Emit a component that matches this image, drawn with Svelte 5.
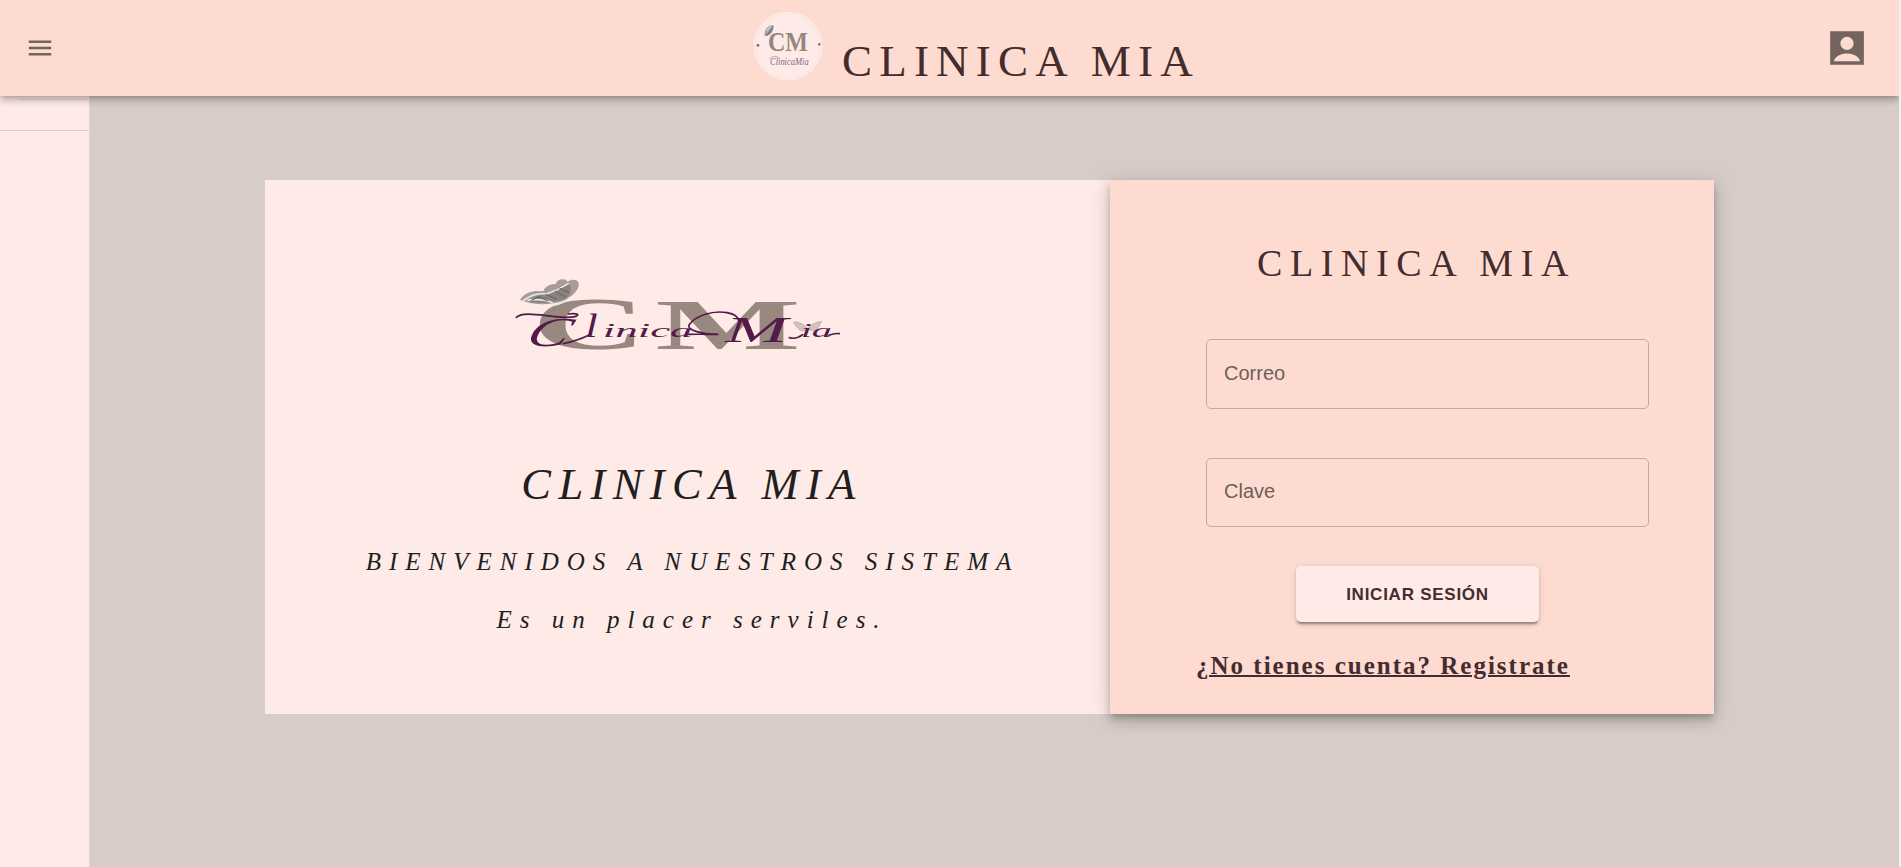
<script>
  const name = 'CLINICA MIA';
  const fields = [
    { id: 'correo', label: 'Correo', type: 'email' },
    { id: 'clave', label: 'Clave', type: 'password' }
  ];
</script>

<div class="page">
  <header>
    <button class="icon menu" aria-label="Menu">
      <svg width="30" height="30" viewBox="0 0 24 24"><path d="M3 18h18v-2H3v2zm0-5h18v-2H3v2zm0-7v2h18V6H3z" /></svg>
    </button>
    <div class="brand">
      <svg class="seal" width="70" height="70" viewBox="0 0 210 210">
        <circle cx="105" cy="105" r="103" fill="#feeae7" />
        <circle cx="105" cy="105" r="96" fill="none" stroke="#ead5d6" stroke-width="2" stroke-dasharray="4 4" />
        <path d="M35 76C32 54 46 42 61 42C63 60 56 73 35 76Z" fill="#a5a3a5" />
        <path d="M40 73C50 67 55 58 59 46" stroke="#737780" stroke-width="5" fill="none" />
        <path d="M41 60Q49 49 56 47" stroke="#c8dadd" stroke-width="4" fill="none" />
        <text class="serif" x="45" y="120" font-size="80" font-weight="700" fill="#948680" textLength="120" lengthAdjust="spacingAndGlyphs">CM</text>
        <text class="serif" x="51" y="162" font-size="34" font-style="italic" fill="#8a648a" textLength="116" lengthAdjust="spacingAndGlyphs">ClinicaMia</text>
        <path d="M49 144Q65 129 80 142" fill="none" stroke="#a486a2" stroke-width="2" />
        <circle cx="15" cy="103" r="4" fill="#805879" />
        <circle cx="199" cy="100" r="4" fill="#9168b4" />
      </svg>
      <h1>{name}</h1>
    </div>
    <button class="icon account" aria-label="Cuenta">
      <svg width="44" height="44" viewBox="0 0 24 24"><path fill-rule="evenodd" d="M2.8 2.8H21.2V21.2H2.8ZM12 5.9A3.6 3.6 0 1 0 12 13.1A3.6 3.6 0 1 0 12 5.9ZM5 19.2H19V18.5C17.8 16.3 15.2 15 12 15S6.2 16.3 5 18.5Z" /></svg>
    </button>
  </header>

  <div class="body">
    <aside><hr class="inset" /><hr class="full" /></aside>
    <main>
      <section class="welcome">
        <svg class="logo" width="360" height="100" viewBox="0 0 1080 300">
          <g class="serif" font-weight="700" fill="#99887f">
            <text transform="translate(96 251) scale(2.2 1.03)" font-size="216">C</text>
            <text transform="translate(466 251) scale(2.14 1.01)" font-size="216">M</text>
          </g>
          <path d="M60 105C76 80 100 76 130 79C134 65 149 57 167 57C172 41 195 39 203 50C224 37 242 49 235 66C228 88 206 98 190 108C154 119 109 124 60 105Z" fill="#aa9b98" />
          <path d="M82 109C109 84 136 90 157 81C181 71 188 57 208 59C218 72 212 91 195 102C170 113 118 118 82 109Z" fill="#8b8280" />
          <path d="M69 108Q100 82 140 87Q177 74 206 55M82 106Q128 99 159 114M153 122Q178 120 197 107" fill="none" stroke="#e2e9eb" stroke-width="5" />
          <path d="M112 94L144 108M137 88L171 103M165 79L198 96M93 107L122 93M178 69L209 84" fill="none" stroke="#626465" stroke-width="3" />
          <path d="M923 190C908 174 892 168 881 172C887 180 886 187 896 188C894 196 911 203 923 191C937 202 955 195 951 189C961 184 958 175 966 170C950 170 933 178 923 190Z" fill="#d2c1bd" stroke="#b5a5a2" stroke-width="2" />
          <g class="serif" font-style="italic" fill="#541b48">
            <text transform="translate(72 242) skewX(-22) scale(1.5 1)" font-size="124">C</text>
            <text transform="translate(256 216) scale(1.3 1)" font-size="104">l</text>
            <text x="308" y="216" font-size="58" textLength="270" lengthAdjust="spacingAndGlyphs">inica</text>
            <text transform="translate(676 230) scale(2.05 1)" font-size="110">M</text>
            <text x="902" y="216" font-size="58" textLength="94" lengthAdjust="spacingAndGlyphs">ia</text>
          </g>
          <path d="M49 157C73 135 147 158 202 157C241 157 245 142 205 147M190 236Q240 225 273 207M566 208C605 207 619 209 650 207M654 208C608 209 560 195 567 180C584 153 638 135 681 143Q714 149 716 168M868 218Q888 224 908 209M987 211Q1003 204 1018 206" fill="none" stroke="#541b48" stroke-width="5" stroke-linecap="round" />
        </svg>
        <h2>{name}</h2>
        <p class="greet">BIENVENIDOS A NUESTROS SISTEMA</p>
        <p class="note">Es un placer serviles.</p>
      </section>
      <section class="login">
        <h2>{name}</h2>
        {#each fields as f}
          <div class="field"><label for={f.id}>{f.label}</label><input id={f.id} type={f.type} /></div>
        {/each}
        <button class="submit">INICIAR SESIÓN</button>
        <a href="#registro">¿No tienes cuenta? Registrate</a>
      </section>
    </main>
  </div>
</div>

<style>
  :global(body) { margin: 0; background: #f1f1f1; overflow: hidden; }
  * { box-sizing: border-box; }
  .page { width: 1899px; height: 867px; background: #d7ccc8; display: flex; flex-direction: column; overflow: hidden; }
  h1, h2, p { margin: 0; font-weight: 400; white-space: nowrap; font-family: "Liberation Serif", "Times New Roman", serif; }
  .serif { font-family: "Liberation Serif", serif; }
  header { position: relative; z-index: 2; flex: none; height: 96px; display: flex; align-items: center; background: #fddbd0;
    padding: 0 30px 0 25px;
    box-shadow: 0 2.5px 5px -1.25px rgba(0,0,0,.2), 0 5px 6.25px rgba(0,0,0,.14), 0 1.25px 12.5px rgba(0,0,0,.12); }
  .icon { border: 0; padding: 0; background: none; display: flex; fill: rgba(0,0,0,.54); }
  .brand { display: flex; align-items: flex-start; height: 96px; margin-left: 698px; padding-top: 11px; }
  .seal { display: block; flex: none; }
  h1 { font-size: 45px; line-height: 52px; letter-spacing: 7.2px; color: #442c2e; margin: 24px 0 0 19px; }
  .account { margin-left: auto; }
  .body { flex: 1; display: flex; }
  aside { width: 90px; background: #feeae7; border-right: 1px solid #e0d8d6; padding-top: 3px; }
  hr { border: 0; height: 1px; margin: 0; background: #ddcac8; }
  .inset { margin-left: 19px; background: #e6d6d3; }
  .full { margin-top: 30px; }
  main { flex: 1; display: flex; align-items: flex-start; padding: 84px 0 0 175px; }
  .welcome { width: 845px; height: 534px; background: #feeae7; padding-top: 85px; text-align: center; color: #211e1e; }
  .logo { display: block; margin-left: 235px; }
  .welcome h2 { font-size: 44.5px; font-style: italic; line-height: 52px; letter-spacing: 7.4px; margin-top: 93px; padding-left: 9px; }
  .welcome p { font-size: 25px; font-style: italic; line-height: 40px; letter-spacing: 8px; }
  .welcome .greet { margin-top: 32px; padding-left: 10px; }
  .welcome .note { margin-top: 18px; padding-left: 9px; }
  .login { position: relative; width: 604px; height: 534px; background: #fddbd0; color: #442c2e; padding: 57px 65px 0 96px;
    display: flex; flex-direction: column;
    box-shadow: 0 3.75px 6.25px -1.25px rgba(0,0,0,.2), 0 7.5px 12.5px rgba(0,0,0,.14), 0 1.25px 22.5px rgba(0,0,0,.12); }
  .login h2 { font-size: 38px; line-height: 52px; letter-spacing: 7.6px; padding-left: 51px; margin-bottom: 50px; }
  .field { height: 70px; border: 1px solid #c2a8a0; border-radius: 5px; display: flex; align-items: center; padding: 0 17px; margin-bottom: 49px;
    font: 20px "Liberation Sans", Arial, sans-serif; color: #6e5f5a; }
  .field + .field { height: 69px; margin-bottom: 39px; }
  .field label { line-height: 24px; padding-bottom: 2px; }
  .field + .field label { padding-bottom: 3px; }
  input { flex: 1; min-width: 0; border: 0; outline: 0; background: none; font: inherit; }
  .submit { width: 243px; height: 56px; margin-left: 90px; border: 0; border-radius: 5px; background: #feeae7; color: #442c2e;
    font: 700 17px "Liberation Sans", Arial, sans-serif; letter-spacing: .75px; padding: 1px 0 0;
    box-shadow: 0 3.75px 1.25px -2.5px rgba(0,0,0,.2), 0 2.5px 2.5px rgba(0,0,0,.14), 0 1.25px 6.25px rgba(0,0,0,.12); }
  a { align-self: flex-start; margin: 28px 0 0 -10px; font: 700 25px/32px "Liberation Serif", "Times New Roman", serif; letter-spacing: 2px; color: #442c2e; white-space: nowrap; text-decoration-thickness: 2px; }
</style>
